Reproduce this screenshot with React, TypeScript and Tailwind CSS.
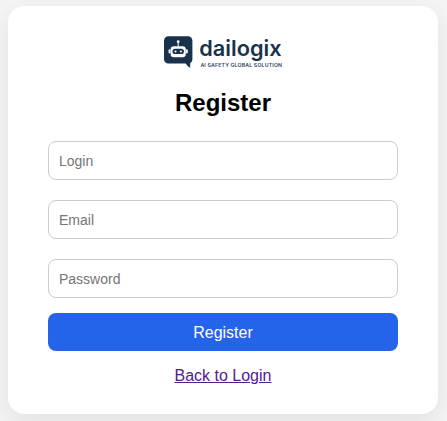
import { useState } from 'react';

const fields = [
  { name: 'login', type: 'text', placeholder: 'Login' },
  { name: 'email', type: 'email', placeholder: 'Email' },
  { name: 'password', type: 'password', placeholder: 'Password' },
];

function Logo() {
  return (
    <svg width="120" height="34" viewBox="0 0 120 34" className="block overflow-visible" role="img" aria-label="dailogix">
      {/* Speech bubble */}
      <path
        d="M5.4 1.3H25a4.4 4.4 0 0 1 4.4 4.4V24.2c0 1.7-.9 3.1-2.2 3.8V32.8c-1.8-.7-3.4-2.3-4.5-4.2H5.4A4.4 4.4 0 0 1 1 24.2V5.7a4.4 4.4 0 0 1 4.4-4.4Z"
        fill="#19324c"
      />
      {/* Robot head */}
      <g fill="#fff">
        <circle cx="15.2" cy="6.7" r="1.4" />
        <rect x="14.7" y="7.5" width="1" height="4" />
        <rect x="5.6" y="14.3" width="1.8" height="4.2" rx=".9" />
        <rect x="23" y="14.3" width="1.8" height="4.2" rx=".9" />
        <rect x="7.6" y="11.2" width="15.2" height="11" rx="3.2" />
      </g>
      <rect x="9.5" y="13.8" width="11.4" height="5.2" rx="2.6" fill="#19324c" />
      <circle cx="12.5" cy="16.4" r="1" fill="#fff" />
      <circle cx="17.9" cy="16.4" r="1" fill="#fff" />
      <text x="36.3" y="20.8" textLength="82.3" lengthAdjust="spacingAndGlyphs" className="fill-[#19324c] font-['Inter',sans-serif] text-[21.5px] font-semibold">
        dailogix
      </text>
      <text x="37.4" y="31.8" textLength="81.6" lengthAdjust="spacing" className="fill-[#2b425a] font-['Inter',sans-serif] text-[5.2px] font-semibold">
        AI SAFETY GLOBAL SOLUTION
      </text>
    </svg>
  );
}

export default function App() {
  const [values, setValues] = useState<Record<string, string>>({});

  return (
    <div className="h-[421px] overflow-hidden bg-[#f4f4f4] pt-1.5 pl-2 font-['Liberation_Sans',Arial,sans-serif] text-black">
      <div className="flex h-[408px] w-[430px] flex-col items-center rounded-2xl bg-white px-10 pt-[29px] shadow-[0_8px_24px_rgba(0,0,0,0.08)]">
        <Logo />
        <h2 className="mt-5 text-2xl leading-7 font-bold">Register</h2>
        <form className="mt-6 flex w-full flex-col" onSubmit={(e) => e.preventDefault()}>
          <div className="flex flex-col gap-5">
            {fields.map((field) => (
              <input
                key={field.name}
                type={field.type}
                placeholder={field.placeholder}
                value={values[field.name] ?? ''}
                onChange={(e) => setValues({ ...values, [field.name]: e.target.value })}
                className="h-[39px] w-full rounded-lg border border-[#cccccc] bg-white px-2.5 text-sm placeholder:text-[#757575] outline-none"
              />
            ))}
          </div>
          <button type="submit" className="mt-[15px] h-[38px] w-full cursor-pointer rounded-lg bg-[#2563eb] pt-0.5 text-base text-white">
            Register
          </button>
        </form>
        <a href="#login" className="mt-4 text-base leading-[18px] text-[#551a8b] underline">
          Back to Login
        </a>
      </div>
    </div>
  );
}
